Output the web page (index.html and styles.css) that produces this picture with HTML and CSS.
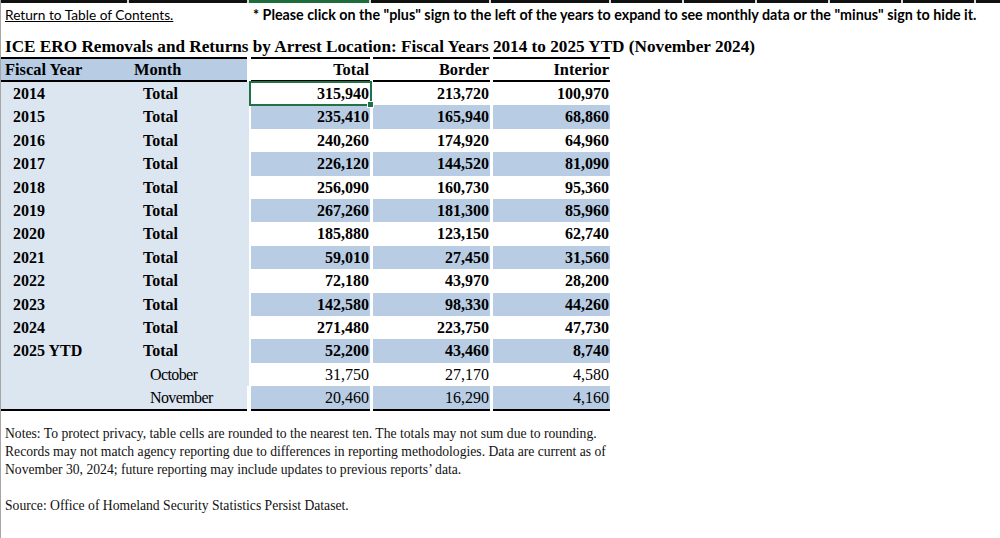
FILE: index.html
```html
<!DOCTYPE html>
<html>
<head>
<meta charset="utf-8">
<link rel="stylesheet" href="styles.css">
</head>
<body>
<div class="sheet">
  <div class="topline">
    <span class="seg w128"></span><span class="seg w120"></span><span class="seg w122 green"></span><span class="seg w120"></span><span class="seg w120"></span><span class="seg w73"></span><span class="seg w73"></span><span class="seg w73"></span><span class="seg w73"></span><span class="seg w73"></span><span class="seg w73"></span><span class="seg rest"></span>
  </div>
  <div class="toprow">
    <a class="toc" href="#">Return to Table of Contents.</a>
    <span class="hint">* Please click on the "plus" sign to the left of the years to expand to see monthly data or the "minus" sign to hide it.</span>
  </div>

  <div class="grid title-row">
    <div class="cell ab"><span class="title">ICE ERO Removals and Returns by Arrest Location: Fiscal Years 2014 to 2025 YTD <span class="title-tail">(November 2024)</span></span></div>
    <div class="cell num"></div>
    <div class="cell num"></div>
    <div class="cell num"></div>
  </div>

  <div class="grid head">
    <div class="cell a">Fiscal Year</div>
    <div class="cell b">Month</div>
    <div class="cell num">Total</div>
    <div class="cell num">Border</div>
    <div class="cell num">Interior</div>
  </div>

  <div class="grid row">
    <div class="cell a yr">2014</div><div class="cell b mo">Total</div>
    <div class="cell num selected">315,940</div><div class="cell num">213,720</div><div class="cell num">100,970</div>
  </div>
  <div class="grid row alt">
    <div class="cell a yr">2015</div><div class="cell b mo">Total</div>
    <div class="cell num">235,410</div><div class="cell num">165,940</div><div class="cell num">68,860</div>
  </div>
  <div class="grid row">
    <div class="cell a yr">2016</div><div class="cell b mo">Total</div>
    <div class="cell num">240,260</div><div class="cell num">174,920</div><div class="cell num">64,960</div>
  </div>
  <div class="grid row alt">
    <div class="cell a yr">2017</div><div class="cell b mo">Total</div>
    <div class="cell num">226,120</div><div class="cell num">144,520</div><div class="cell num">81,090</div>
  </div>
  <div class="grid row">
    <div class="cell a yr">2018</div><div class="cell b mo">Total</div>
    <div class="cell num">256,090</div><div class="cell num">160,730</div><div class="cell num">95,360</div>
  </div>
  <div class="grid row alt">
    <div class="cell a yr">2019</div><div class="cell b mo">Total</div>
    <div class="cell num">267,260</div><div class="cell num">181,300</div><div class="cell num">85,960</div>
  </div>
  <div class="grid row">
    <div class="cell a yr">2020</div><div class="cell b mo">Total</div>
    <div class="cell num">185,880</div><div class="cell num">123,150</div><div class="cell num">62,740</div>
  </div>
  <div class="grid row alt">
    <div class="cell a yr">2021</div><div class="cell b mo">Total</div>
    <div class="cell num">59,010</div><div class="cell num">27,450</div><div class="cell num">31,560</div>
  </div>
  <div class="grid row">
    <div class="cell a yr">2022</div><div class="cell b mo">Total</div>
    <div class="cell num">72,180</div><div class="cell num">43,970</div><div class="cell num">28,200</div>
  </div>
  <div class="grid row alt">
    <div class="cell a yr">2023</div><div class="cell b mo">Total</div>
    <div class="cell num">142,580</div><div class="cell num">98,330</div><div class="cell num">44,260</div>
  </div>
  <div class="grid row">
    <div class="cell a yr">2024</div><div class="cell b mo">Total</div>
    <div class="cell num">271,480</div><div class="cell num">223,750</div><div class="cell num">47,730</div>
  </div>
  <div class="grid row alt">
    <div class="cell a yr">2025 YTD</div><div class="cell b mo">Total</div>
    <div class="cell num">52,200</div><div class="cell num">43,460</div><div class="cell num">8,740</div>
  </div>
  <div class="grid row month">
    <div class="cell a yr"></div><div class="cell b mo">October</div>
    <div class="cell num">31,750</div><div class="cell num">27,170</div><div class="cell num">4,580</div>
  </div>
  <div class="grid row alt month last">
    <div class="cell a yr"></div><div class="cell b mo">November</div>
    <div class="cell num">20,460</div><div class="cell num">16,290</div><div class="cell num">4,160</div>
  </div>

  <div class="notes">
    <p>Notes: To protect privacy, table cells are rounded to the nearest ten. The totals may not sum due to rounding. Records may not match agency reporting due to differences in reporting methodologies. Data are current as of November 30, 2024; future reporting may include updates to previous reports’ data.</p>
    <p>Source: Office of Homeland Security Statistics Persist Dataset.</p>
  </div>
</div>
</body>
</html>
```

FILE: styles.css
```css
html, body {
  margin: 0;
  padding: 0;
  background: #fff;
}
body {
  width: 1000px;
  height: 538px;
  overflow: hidden;
}
.sheet {
  height: 538px;
  border-left: 1px solid #a6a6a6;
  box-sizing: border-box;
  font-family: "Liberation Serif", "Times New Roman", serif;
  color: #000;
}

/* top border strip */
.topline {
  display: flex;
  height: 3px;
  gap: 2px;
  background: #d9d9d9;
}
.seg { height: 3px; background: #111; flex: none; }
.w128 { width: 126px; }
.w120 { width: 118px; }
.w122 { width: 120px; }
.w73 { width: 71px; }
.rest { flex: 1; }
.green { background: #1e6b3c; }

/* link + hint row */
.toprow {
  display: flex;
  align-items: center;
  height: 22px;
  font-family: Lato, "Liberation Sans", sans-serif;
}
.toc {
  color: #000;
  text-decoration: underline;
  margin-left: 4px;
  width: 248px;
  font-size: 13.7px;
}
.hint {
  font-weight: bold;
  font-size: 14.3px;
}

/* table grid */
.grid {
  display: grid;
  grid-template-columns: 128px 120px 122px 120px 120px;
  width: 610px;
}
.cell {
  box-sizing: border-box;
  white-space: nowrap;
}
.num {
  margin: 0 1px 0 2px;
  text-align: right;
  padding-right: 1px;
}

.title-row {
  height: 34px;
  grid-template-columns: 248px 122px 120px 120px;
}
.title-row .cell {
  border-bottom: 2px solid #000;
}
.title-row .ab {
  margin-right: 2px;
}
.title {
  display: block;
  padding: 12px 0 0 4px;
  font-size: 17.2px;
  line-height: 20px;
  font-weight: bold;
}
.title-tail {
  font-weight: bold;
}

.head {
  height: 23px;
  font-size: 16.4px;
  font-weight: bold;
  line-height: 21px;
}
.head .cell {
  border-bottom: 2px solid #000;
}
.head .a, .head .b {
  background: #b8cce4;
}
.head .a { padding-left: 4px; }
.head .b { padding-left: 5px; margin-right: 2px; }
.head .num { padding-right: 1px; }

.row {
  height: 23.4px;
  font-size: 16px;
  font-weight: bold;
  line-height: 23px;
}
.row .a, .row .b {
  background: #dce6f1;
}
.row .a { padding-left: 12px; }
.row .b { padding-left: 14px; }
.row.alt .num {
  background: #b8cce4;
}
.month .num,
.month .mo {
  font-weight: normal;
}
.month .mo {
  font-size: 16px;
  letter-spacing: -0.6px;
}
.month .b { padding-left: 21px; }
.last {
  height: 23.4px;
}
.last .cell {
  border-bottom: 2px solid #000;
}
.last .b { margin-right: 2px; }

.selected {
  position: relative;
}
.selected::after {
  content: "";
  position: absolute;
  left: -2px;
  top: -1px;
  right: -2px;
  bottom: -1px;
  border: 2px solid #217346;
}
.selected::before {
  content: "";
  position: absolute;
  right: -4px;
  bottom: -3px;
  width: 5px;
  height: 5px;
  background: #217346;
  border: 1px solid #fff;
  z-index: 2;
}

.notes {
  margin-top: 16px;
  padding-left: 4px;
  width: 620px;
  font-size: 13.65px;
  line-height: 18px;
  color: #111;
}
.notes p {
  margin: 0 0 18px 0;
}
```
